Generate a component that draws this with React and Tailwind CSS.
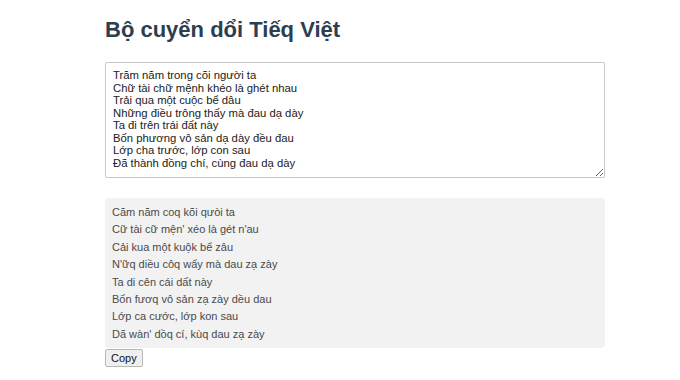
import { useState } from "react";

const INPUT = `Trăm năm trong cõi người ta
Chữ tài chữ mệnh khéo là ghét nhau
Trải qua một cuộc bể dâu
Những điều trông thấy mà đau dạ dày
Ta đi trên trái đất này
Bốn phương vô sản dạ dày đều đau
Lớp cha trước, lớp con sau
Đã thành đồng chí, cùng đau dạ dày`;

const OUTPUT = [
    "Căm năm coq kõi qưòi ta",
    "Cữ tài cữ mện' xéo là gét n'au",
    "Cải kua một kuộk bể zâu",
    "N'ữq diều côq wẩy mà dau zạ zày",
    "Ta di cên cái dất này",
    "Bốn fươq vô sản zạ zày dều dau",
    "Lớp ca cước, lớp kon sau",
    "Dã wàn' dồq cí, kùq dau zạ zày",
];

export default function App() {
    const [text, setText] = useState(INPUT);

    return (
        <div className="min-h-screen bg-white font-['Liberation_Sans',Arial,sans-serif]">
            <div className="ml-[105px] w-[500px] pt-[16px]">
                <h1 className="text-[22px] font-bold leading-[28px] text-[#2c3e50]">
                    Bộ cuyển dổi Tiếq Việt
                </h1>

                <textarea
                    className="mt-[18px] block h-[116px] w-full resize-y rounded-[2px] border border-[#c8c8c8] px-[7px] pt-[6px] pb-[4px] text-[11.3px] leading-[12.5px] text-[#222] outline-none"
                    value={text}
                    onChange={(e) => setText(e.target.value)}
                />

                <div className="mt-[20px] h-[150px] rounded-[4px] bg-[#f2f2f2] px-[7px] pt-[6px] text-[11px] leading-[17.4px] text-[#4a4a4a]">
                    {OUTPUT.map((line, i) => (
                        <div key={i}>{line}</div>
                    ))}
                </div>

                <button
                    type="button"
                    className="mt-[1px] block h-[18px] rounded-[2px] border border-[#b8b8b8] bg-[#efefef] px-[5px] text-[11px] leading-[16px] text-[#111]"
                >
                    Copy
                </button>
            </div>
        </div>
    );
}
